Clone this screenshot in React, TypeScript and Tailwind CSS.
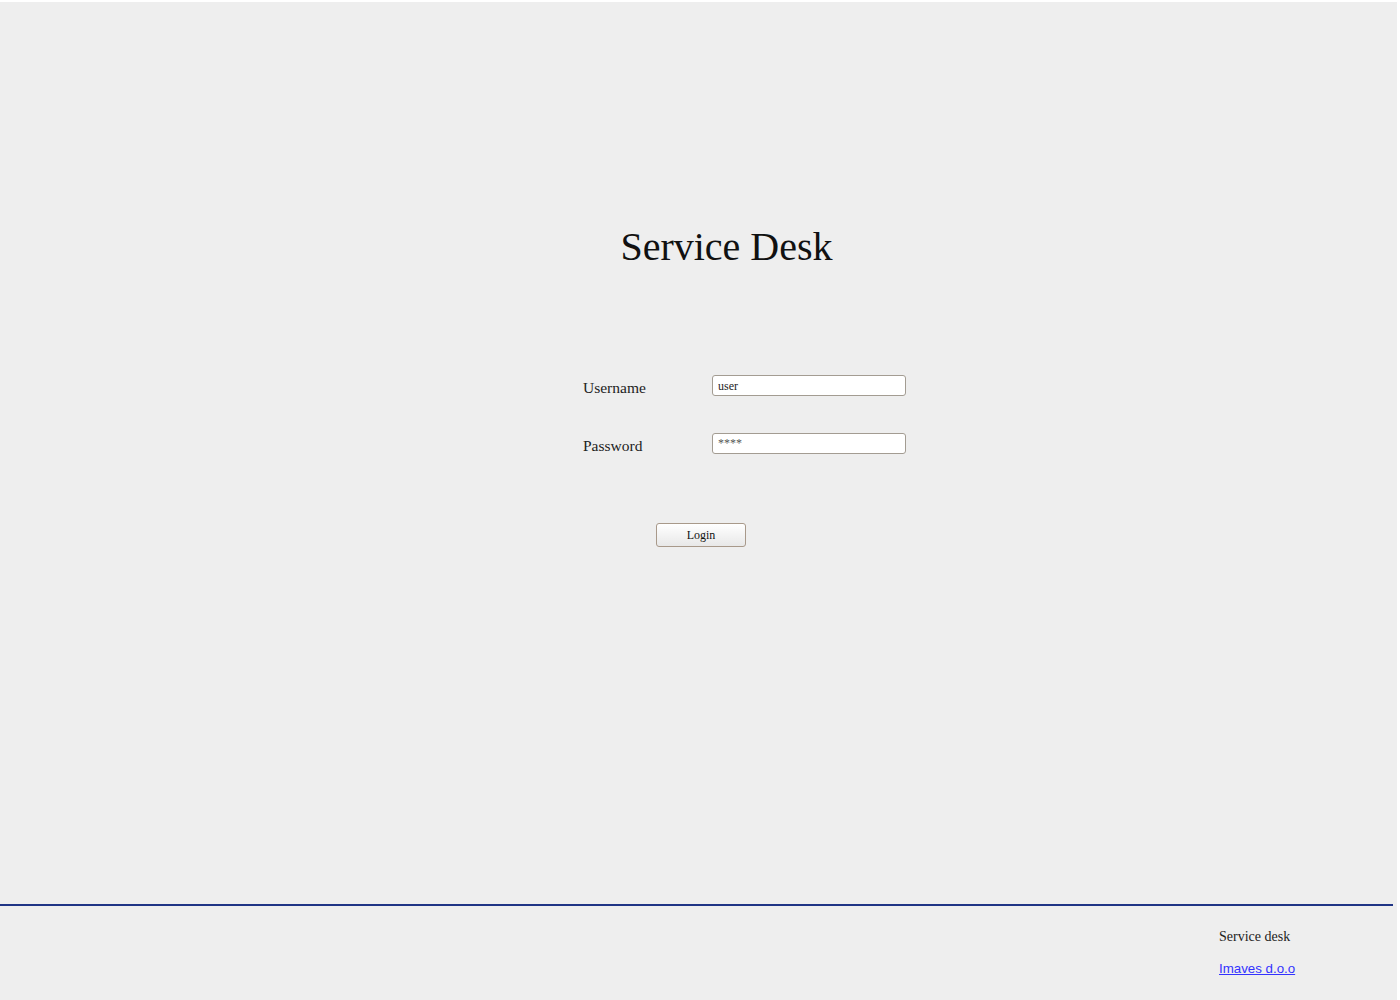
import React from 'react';

export default function App() {
  return (
    <div className="bg-white w-[1400px] h-[1000px] overflow-hidden">
      <div className="mt-[2px] w-[1397px] h-[998px] bg-[#eeeeee] flex flex-col font-['Liberation_Serif',serif]">
        {/* Title */}
        <h1 className="mt-[222px] pl-[56px] text-center text-[40px] leading-[46px] text-[#111111]">
          Service Desk
        </h1>

        {/* Login form */}
        <form className="mt-[105px] ml-[583px] w-[323px]" onSubmit={(e) => e.preventDefault()}>
          <div className="grid grid-cols-[129px_194px] gap-y-[37px]">
            <label className="self-end text-[15.5px] leading-[16px] text-[#222222]">Username</label>
            <input
              type="text"
              defaultValue="user"
              className="h-[21px] w-[194px] rounded-[3px] border border-[#a39c92] bg-white px-[5px] pt-[1px] text-[12px] text-[#222222] outline-none font-['Liberation_Serif',serif]"
            />
            <label className="self-end text-[15.5px] leading-[16px] text-[#222222]">Password</label>
            <input
              type="text"
              defaultValue="****"
              className="h-[21px] w-[194px] rounded-[3px] border border-[#a39c92] bg-white px-[5px] text-[12px] text-[#555555] outline-none font-['Liberation_Serif',serif]"
            />
          </div>
          <button
            type="submit"
            className="mt-[69px] ml-[73px] h-[24px] w-[90px] rounded-[3px] border border-[#a8998a] bg-gradient-to-b from-[#ffffff] to-[#e8e8e8] text-[12px] leading-[22px] text-[#111111] font-['Liberation_Serif',serif]"
          >
            Login
          </button>
        </form>

        <div className="flex-1" />

        {/* Footer */}
        <footer className="w-[1393px] h-[96px] border-t-2 border-[#1f3485]">
          <div className="ml-[1219px] pt-[23px]">
            <p className="text-[14px] leading-[16px] text-[#222222]">Service desk</p>
            <a
              href="#"
              className="mt-[16px] block w-max text-[13.3px] leading-[15px] text-[#3333ff] underline font-['Liberation_Sans',Arial,sans-serif]"
            >
              Imaves d.o.o
            </a>
          </div>
        </footer>
      </div>
    </div>
  );
}
